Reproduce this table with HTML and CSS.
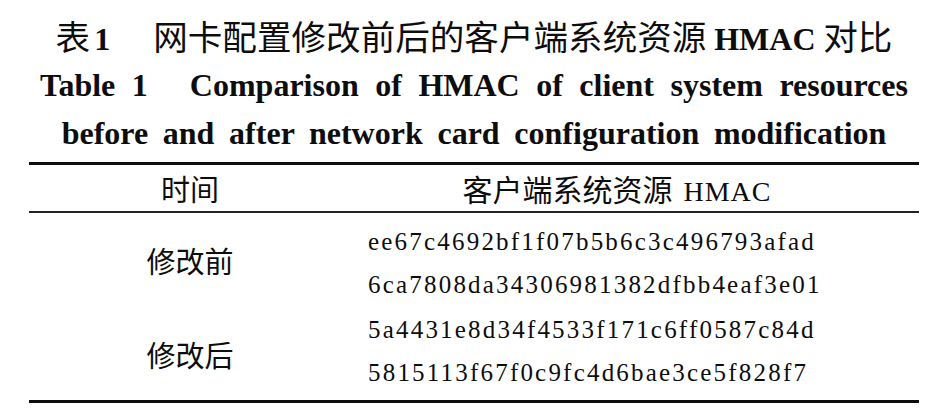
FILE: index.html
```html
<!DOCTYPE html>
<html lang="zh">
<head>
<meta charset="utf-8">
<title>表1 网卡配置修改前后的客户端系统资源 HMAC 对比</title>
<link rel="stylesheet" href="styles.css">
</head>
<body>
<div class="figure">
  <div class="caption">
    <div class="cap-zh"><span class="cap-label">表<b class="num">1</b></span><span>网卡配置修改前后的客户端系统资源 <b class="latin">HMAC</b> 对比</span></div>
    <div class="cap-en cap-en-1"><span class="cap-label-en">Table 1</span><span>Comparison of HMAC of client system resources</span></div>
    <div class="cap-en cap-en-2">before and after network card configuration modification</div>
  </div>
  <table class="tbl">
    <thead>
      <tr>
        <th class="c1">时间</th>
        <th class="c2">客户端系统资源<span class="hmac">HMAC</span></th>
      </tr>
    </thead>
    <tbody>
      <tr class="row-first">
        <td class="c1">修改前</td>
        <td class="c2 hashes"><div class="hash">ee67c4692bf1f07b5b6c3c496793afad</div><div class="hash">6ca7808da34306981382dfbb4eaf3e01</div></td>
      </tr>
      <tr class="row-last">
        <td class="c1">修改后</td>
        <td class="c2 hashes"><div class="hash">5a4431e8d34f4533f171c6ff0587c84d</div><div class="hash">5815113f67f0c9fc4d6bae3ce5f828f7</div></td>
      </tr>
    </tbody>
  </table>
</div>
</body>
</html>
```

FILE: styles.css
```css
html, body {
  margin: 0;
  padding: 0;
  background: #ffffff;
  color: #0d0d0d;
}

.figure {
  width: 890px;
  margin-left: 29px;
  padding-top: 13px;
}

.caption {
  display: flex;
  flex-direction: column;
  align-items: center;
}

.cap-zh {
  font-family: "Noto Sans CJK SC", "Liberation Serif", sans-serif;
  font-size: 34.6px;
  line-height: 44px;
  color: #0d0d0d;
}

.cap-label {
  margin-right: 43px;
}

.num, .latin {
  font-family: "Liberation Serif", serif;
  font-weight: bold;
  font-size: 32px;
}

.num {
  margin-left: 4px;
}

.cap-en {
  font-family: "Liberation Serif", serif;
  font-weight: bold;
  font-size: 32px;
  line-height: 48px;
  color: #0d0d0d;
}

.cap-en-1 {
  word-spacing: 8.5px;
}

.cap-label-en {
  margin-right: 42px;
}

.cap-en-2 {
  word-spacing: 6.7px;
}

.tbl {
  width: 890px;
  margin-top: 5px;
  border-collapse: collapse;
  border-top: 3px solid #0d0d0d;
  border-bottom: 3px solid #0d0d0d;
}

.tbl th, .tbl td {
  padding: 0;
  font-weight: normal;
  font-family: "Noto Sans CJK SC", sans-serif;
  font-size: 29px;
  color: #0d0d0d;
}

.tbl thead th {
  height: 46px;
  border-bottom: 2px solid #222;
  vertical-align: middle;
}

.c1 {
  width: 322px;
  text-align: center;
}

th.c2 {
  text-align: center;
  padding-right: 36px;
  font-size: 30px;
}

.hmac {
  font-family: "Liberation Serif", serif;
  font-size: 28px;
  letter-spacing: 1px;
  margin-left: 11px;
}

td.hashes {
  text-align: left;
  padding: 1px 0 1px 17px;
}

.row-first td.hashes {
  padding-top: 7px;
}

.row-last td.hashes {
  padding-bottom: 6px;
}

.hash {
  font-family: "Liberation Serif", serif;
  font-size: 25px;
  letter-spacing: 2.2px;
  line-height: 43px;
}
```
